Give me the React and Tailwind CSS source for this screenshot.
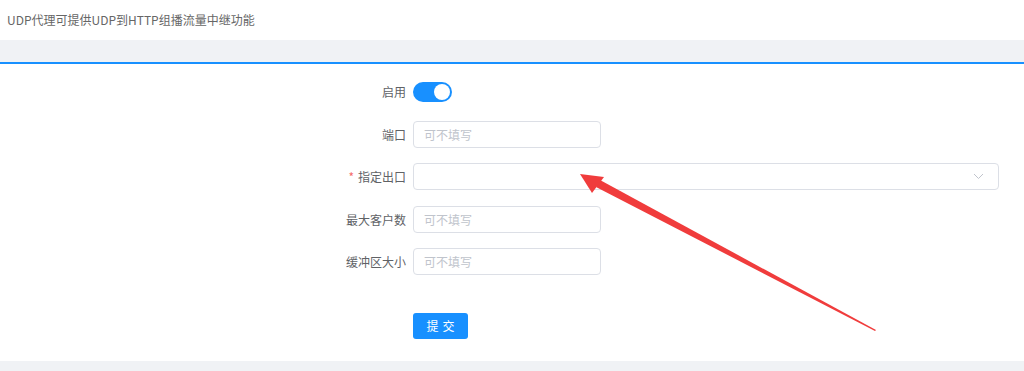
import React from 'react';

const font = { fontFamily: '"Noto Sans CJK SC", "Noto Sans", sans-serif' };

const TextField = ({ wide }) => (
  <div
    className={`h-[27px] ${wide ? 'w-[586px]' : 'w-[188px]'} rounded-[4px] border border-[#dcdfe6] bg-white px-[10px] flex items-center text-[12px] text-[#c0c4cc]`}
  >
    {!wide && '可不填写'}
    {wide && (
      <>
        <span className="flex-1" />
        <svg width="11" height="7" viewBox="0 0 11 7" className="mr-[4px]">
          <path d="M1 1 L5.5 5.5 L10 1" fill="none" stroke="#c0c4cc" strokeWidth="1" />
        </svg>
      </>
    )}
  </div>
);

const Row = ({ label, required, children, className = '' }) => (
  <div className={`flex items-center h-[27px] ${className}`}>
    <div className="w-[107px] pr-[7px] text-right text-[12px] text-[#606266] whitespace-nowrap">
      {required && <span className="text-[#f56c6c] mr-[4px]">*</span>}
      {label}
    </div>
    {children}
  </div>
);

const Arrow = () => (
  <svg className="absolute left-0 top-0 pointer-events-none" width="1024" height="371">
    <polygon points="600,180 876,330 875,331 596,187" fill="#f03c3c" />
    <polygon points="580,174 604,177 592,193" fill="#f03c3c" />
  </svg>
);

export default function App() {
  return (
    <div className="relative w-[1024px] h-[371px] bg-[#f0f2f5] overflow-hidden" style={font}>
      <div className="h-[40px] bg-white flex items-center pl-[7px] text-[12px] text-[#666]">
        UDP代理可提供UDP到HTTP组播流量中继功能
      </div>
      <div className="h-[22px]" />
      <div className="h-[2px] bg-[#1890ff]" />
      <div className="h-[297px] bg-white pl-[306px] pt-[14px]">
        <Row label="启用" className="mb-[16px]">
          <div className="w-[39px] h-[20px] rounded-full bg-[#1890ff] flex items-center justify-end pr-[2px]">
            <div className="w-[16px] h-[16px] rounded-full bg-white" />
          </div>
        </Row>
        <Row label="端口" className="mb-[15px]">
          <TextField />
        </Row>
        <Row label="指定出口" required className="mb-[16px]">
          <TextField wide />
        </Row>
        <Row label="最大客户数" className="mb-[15px]">
          <TextField />
        </Row>
        <Row label="缓冲区大小" className="mb-[37px]">
          <TextField />
        </Row>
        <div className="pl-[107px]">
          <button className="w-[55px] h-[26px] rounded-[3px] bg-[#1890ff] text-white text-[12px] tracking-[4px] pl-[4px]">
            提交
          </button>
        </div>
      </div>
      <Arrow />
    </div>
  );
}
